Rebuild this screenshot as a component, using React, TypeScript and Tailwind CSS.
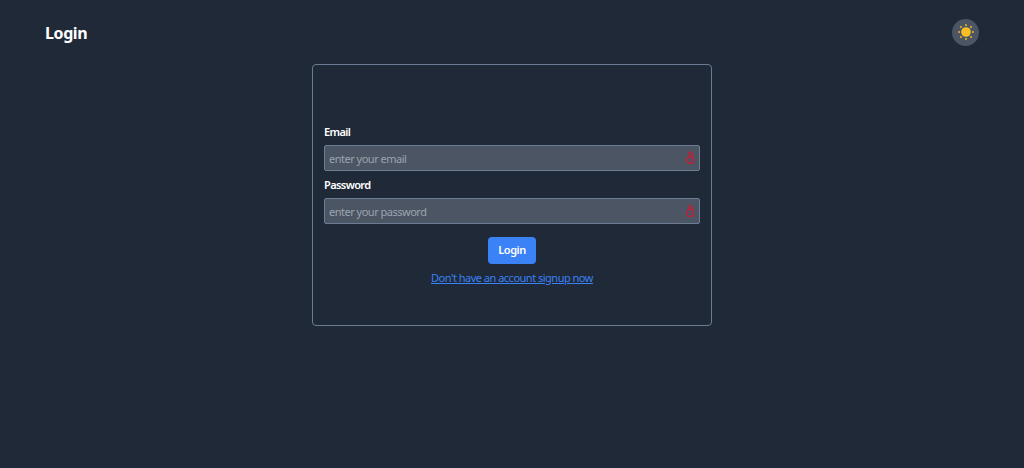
function LockIcon({ variant }: { variant: "round" | "square" }) {
  return (
    <svg
      className="absolute right-[5px] top-[6px] w-[9px] h-[13px]"
      viewBox="0 0 9 13"
      fill="none"
      stroke="#e0102f"
      strokeWidth="1.1"
    >
      <path d={variant === "round" ? "M2.6 6V2.9a1.9 1.9 0 0 1 3.8 0V6" : "M2.8 6V3.2a1.7 1.7 0 0 1 3.4 0V6"} />
      <rect x="1.3" y="5.8" width="6.4" height="6.4" rx={variant === "round" ? 2.8 : 1.2} />
      <circle cx="4.5" cy="9" r="0.6" fill="#e0102f" stroke="none" />
    </svg>
  );
}

function SunIcon() {
  const rays = [
    [9, 1.2, 9, 3],
    [9, 15, 9, 16.8],
    [1.2, 9, 3, 9],
    [15, 9, 16.8, 9],
    [3.4, 3.4, 4.6, 4.6],
    [13.4, 13.4, 14.6, 14.6],
    [3.4, 14.6, 4.6, 13.4],
    [13.4, 4.6, 14.6, 3.4],
  ];
  return (
    <svg className="w-[18px] h-[18px]" viewBox="0 0 18 18" fill="none">
      <circle cx="9" cy="9" r="4.8" fill="#fbbf24" />
      {rays.map(([x1, y1, x2, y2], i) => (
        <line key={i} x1={x1} y1={y1} x2={x2} y2={y2} stroke="#fbbf24" strokeWidth="1.6" />
      ))}
    </svg>
  );
}

function Field({ label, placeholder, type, variant }: { label: string; placeholder: string; type: string; variant: "round" | "square" }) {
  return (
    <div className="flex flex-col">
      <label className="text-[11px] leading-[16px] font-semibold tracking-[-0.6px] text-white mb-[5px]">{label}</label>
      <div className="relative">
        <input
          type={type}
          placeholder={placeholder}
          className="block w-full h-[26px] bg-[#4b5563] border border-[#6b7c93] rounded-[2px] px-1 text-[11px] tracking-[-0.5px] text-white placeholder:text-[#9ca3af] outline-none"
        />
        <LockIcon variant={variant} />
      </div>
    </div>
  );
}

export default function App() {
  return (
    <div className="min-h-[468px] bg-[#1f2937] font-['Noto_Sans',sans-serif]">
      <header className="flex items-center justify-between pl-[45px] pr-[45px] h-[64px]">
        <h1 className="text-[16px] pt-[1px] font-bold tracking-[-0.4px] text-white">Login</h1>
        <button className="w-[27px] h-[27px] rounded-full bg-[#4b5563] flex items-center justify-center">
          <SunIcon />
        </button>
      </header>
      <main className="flex justify-center">
        <form className="w-[400px] h-[262px] border border-[#6b7c93] rounded-[4px] px-[11px] pt-[59px] flex flex-col">
          <div className="flex flex-col gap-[6px]">
            <Field label="Email" placeholder="enter your email" type="email" variant="round" />
            <Field label="Password" placeholder="enter your password" type="password" variant="square" />
          </div>
          <div className="flex flex-col items-center mt-[13px]">
            <button type="button" className="w-[48px] h-[27px] rounded-[4px] bg-[#3b82f6] text-white text-[11px] font-semibold tracking-[-0.5px]">Login</button>
            <a href="#" className="mt-[6px] text-[11px] leading-[16px] tracking-[-0.5px] text-[#3b82f6] underline">Don't have an account signup now</a>
          </div>
        </form>
      </main>
    </div>
  );
}
